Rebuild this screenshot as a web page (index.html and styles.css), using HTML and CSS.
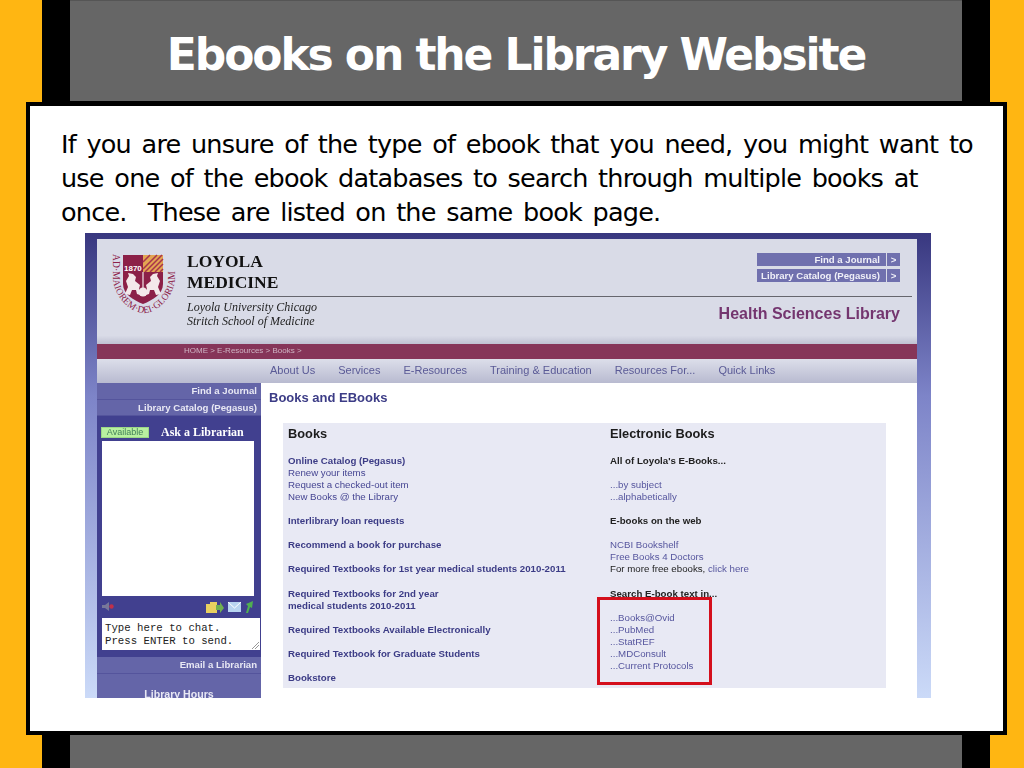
FILE: index.html
```html
<!DOCTYPE html>
<html lang="en">
<head>
    <meta charset="utf-8">
    <meta name="viewport" content="width=device-width, initial-scale=1.0">
    <title>Ebooks on the Library Website</title>
    <link rel="stylesheet" href="styles.css">
</head>
<body>
    <div class="slide">
        <h1 class="title-bar">Ebooks on the Library Website</h1>

        <div class="card">
            <p class="intro">If you are unsure of the type of ebook that you need, you might want to<br>use one of the ebook databases to search through multiple books at<br>once.&nbsp; These are listed on the same book page.</p>

            <!-- library website screenshot -->
            <div class="shot">
                <div class="site">
                    <header class="site-head">
                        <div class="brand-row">
                            <svg class="crest" width="68" height="68" viewBox="0 0 68 68">
                                <defs>
                                    <path id="motto" d="M3 6 V28 C3 50 22 65 34 65 C46 65 65 50 65 28 V6"></path>
                                </defs>
                                <text class="motto"><textPath href="#motto" textLength="132">AD·MAIOREM·DEI·GLORIAM</textPath></text>
                                <path d="M13 7 H53 V36 C53 46 43 52 33 56 C23 52 13 46 13 36 Z" fill="#8c2048"></path>
                                <path d="M33 7 H53 V24 H33 Z" fill="#e3a552"></path>
                                <path d="M35 24 L52 7 M40 24 L53 11 M33 21 L47 7 M45 24 L53 16 M33 14 L40 7 M50 24 L53 21" stroke="#a8344c" stroke-width="1.500"></path>
                                <text class="crest-year" x="14" y="23">1870</text>
                                <!-- lions and kettle -->
                                <path d="M15 46 L18 39 L16 33 L19 28 L18 25 L23 26 L26 29 L25 33 L30 37 L29 41 L30 47 L27 46 L26 42 L22 42 L20 47 Z" fill="#f4e8ea"></path>
                                <path d="M51 46 L48 39 L50 33 L47 28 L48 25 L43 26 L40 29 L41 33 L36 37 L37 41 L36 47 L39 46 L40 42 L44 42 L46 47 Z" fill="#f4e8ea"></path>
                                <path d="M33 24 V40" stroke="#f4e8ea" stroke-width="1.200"></path>
                                <circle cx="33" cy="44" r="4.500" fill="#f4e8ea"></circle>
                            </svg>
                            <div class="brand-name">LOYOLA<br>MEDICINE</div>
                            <div class="quick-btns">
                                <a class="quick-btn"><span>Find a Journal</span><b>&gt;</b></a>
                                <a class="quick-btn"><span>Library Catalog (Pegasus)</span><b>&gt;</b></a>
                            </div>
                        </div>
                        <div class="brand-sub">
                            <div class="school">Loyola University Chicago<br>Stritch School of Medicine</div>
                            <div class="hsl">Health Sciences Library</div>
                        </div>
                    </header>

                    <div class="crumbs">HOME &gt; E-Resources &gt; Books &gt;</div>

                    <nav class="site-nav">
                        <a>About Us</a>
                        <a>Services</a>
                        <a>E-Resources</a>
                        <a>Training &amp; Education</a>
                        <a>Resources For...</a>
                        <a>Quick Links</a>
                    </nav>

                    <div class="site-body">
                        <aside class="side">
                            <a class="side-link side-link-first">Find a Journal</a>
                            <a class="side-link">Library Catalog (Pegasus)</a>
                            <div class="chat">
                                <div class="chat-top">
                                    <span class="badge">Available</span>
                                    <span class="ask">Ask a Librarian</span>
                                </div>
                                <div class="chat-log"></div>
                                <div class="chat-icons">
                                    <svg width="12" height="10" viewBox="0 0 12 10">
                                        <path d="M0 3 H3 L7 0 V9 L3 6 H0 Z" fill="#77789a"></path>
                                        <circle cx="9.500" cy="4.500" r="2.200" fill="#c0304a"></circle>
                                    </svg>
                                    <span class="chat-tools">
                                        <svg width="18" height="14" viewBox="0 0 18 14">
                                            <path d="M0 4 H4 V2 H11 V13 H0 Z" fill="#e8d060"></path>
                                            <path d="M10 5 H14 V2 L18 8 L14 13 V10 H10 Z" fill="#70b050"></path>
                                        </svg>
                                        <svg width="13" height="10" viewBox="0 0 13 10">
                                            <rect width="13" height="10" fill="#b8d4f0"></rect>
                                            <path d="M0 0 L6.500 6 L13 0" fill="none" stroke="#ffffff"></path>
                                        </svg>
                                        <svg width="9" height="12" viewBox="0 0 9 12">
                                            <path d="M1 12 L3 5 L1 3 L8 0 L7 7 L5 6 L3 12 Z" fill="#50b050"></path>
                                        </svg>
                                    </span>
                                </div>
                                <div class="chat-input">Type here to chat.<br>Press ENTER to send.
                                    <svg class="grip" width="7" height="7" viewBox="0 0 7 7">
                                        <path d="M0 7 L7 0 M3 7 L7 3" stroke="#999"></path>
                                    </svg>
                                </div>
                            </div>
                            <a class="side-link side-email">Email a Librarian</a>
                            <a class="side-hours">Library Hours</a>
                        </aside>

                        <main class="main">
                            <h2 class="page-title">Books and EBooks</h2>
                            <div class="book-box">
                                <div class="book-col">
                                    <h3>Books</h3>
                                    <a class="strong">Online Catalog (Pegasus)</a>
                                    <a>Renew your items</a>
                                    <a>Request a checked-out item</a>
                                    <a>New Books @ the Library</a>
                                    <a class="strong gap">Interlibrary loan requests</a>
                                    <a class="strong gap">Recommend a book for purchase</a>
                                    <a class="strong gap">Required Textbooks for 1st year medical students 2010-2011</a>
                                    <a class="strong gap">Required Textbooks for 2nd year<br>medical students 2010-2011</a>
                                    <a class="strong gap">Required Textbooks Available Electronically</a>
                                    <a class="strong gap">Required Textbook for Graduate Students</a>
                                    <a class="strong gap">Bookstore</a>
                                </div>
                                <div class="book-col book-col-right">
                                    <h3>Electronic Books</h3>
                                    <b class="dark">All of Loyola's E-Books...</b>
                                    <a class="gap">...by subject</a>
                                    <a>...alphabetically</a>
                                    <b class="dark gap">E-books on the web</b>
                                    <a class="gap">NCBI Bookshelf</a>
                                    <a>Free Books 4 Doctors</a>
                                    <span class="dark-line">For more free ebooks, <a class="inline-link">click here</a></span>
                                    <b class="dark gap">Search E-book text in...</b>
                                    <a class="gap">...Books@Ovid</a>
                                    <a>...PubMed</a>
                                    <a>...StatREF</a>
                                    <a>...MDConsult</a>
                                    <a>...Current Protocols</a>
                                </div>
                            </div>
                        </main>
                    </div>
                </div>
                <div class="highlight"></div>
            </div>
        </div>

        <div class="foot-bar"></div>
    </div>
</body>
</html>
```

FILE: styles.css
```css
* {
    box-sizing: border-box;
}

body {
    margin: 0;
    background-color: #ffb612;
    font-family: "Liberation Sans", Arial, sans-serif;
}

/* black band with the grey title behind the white card */
.slide {
    width: 948px;
    height: 768px;
    margin: 0 0 0 42px;
    padding: 0 28px;
    background-color: #000;
}

.title-bar {
    height: 101px;
    margin: 0;
    padding-top: 27px;
    background-color: #666;
    border-top: 1px solid #555;
    color: #fff;
    font-family: "DejaVu Sans", sans-serif;
    font-size: 44px;
    font-weight: 700;
    letter-spacing: -2.1px;
    line-height: 54px;
    text-align: center;
}

.card {
    position: relative;
    z-index: 1;
    width: 981px;
    height: 633px;
    margin: 1px 0 0 -44px;
    padding: 21px 0 0 31px;
    background-color: #fff;
    border: 4px solid #000;
}

.foot-bar {
    height: 33px;
    background-color: #666;
}

.intro {
    margin: 0;
    color: #000;
    font-family: "DejaVu Sans", sans-serif;
    font-size: 25.500px;
    letter-spacing: -0.8px;
    word-spacing: 3.300px;
    line-height: 34px;
}

/* the screenshot */
.shot {
    position: relative;
    width: 846px;
    height: 465px;
    margin: 4px 0 0 24px;
    padding: 6px 14px 0 12px;
    background: linear-gradient(#38377f, #7d84c8 35%, #cbdaf8);
    overflow: hidden;
}

.site {
    height: 459px;
    background-color: #fff;
    filter: blur(0.4px);
}

.site-head {
    height: 105px;
    padding: 9px 17px 0 13px;
    background: linear-gradient(#d9dbe7 92%, #bfc1d2);
}

.brand-row {
    display: flex;
    height: 48px;
}

.crest {
    flex: none;
}

.motto {
    font-family: "Liberation Serif", serif;
    font-size: 9.500px;
    fill: #8c2048;
}

.crest-year {
    font-family: "Liberation Sans", sans-serif;
    font-size: 8px;
    font-weight: 700;
    fill: #fff;
}

.brand-name {
    margin-left: 9px;
    padding-top: 3px;
    color: #111;
    font-family: "Liberation Serif", serif;
    font-size: 17.500px;
    font-weight: 700;
    line-height: 21px;
}

.quick-btns {
    display: flex;
    flex-direction: column;
    gap: 3px;
    width: 143px;
    margin-left: auto;
    margin-top: 5px;
}

.quick-btn {
    display: flex;
    gap: 1px;
    height: 13px;
    color: #f0f0f8;
    font-size: 9.600px;
    font-weight: 700;
    line-height: 13px;
}

.quick-btn span {
    flex: 1;
    padding-right: 6px;
    background-color: #7070ae;
    text-align: right;
    white-space: nowrap;
}

.quick-btn b {
    width: 13px;
    background-color: #7070ae;
    text-align: center;
}

.brand-sub {
    display: flex;
    justify-content: space-between;
    height: 48px;
    margin: 0 -12px 0 77px;
    padding: 3px 12px 0 0;
    border-top: 1px solid #66666e;
}

.school {
    color: #222;
    font-family: "Liberation Serif", serif;
    font-size: 12px;
    font-style: italic;
    line-height: 14px;
}

.hsl {
    margin-top: 5px;
    color: #74356f;
    font-size: 16px;
    font-weight: 700;
    line-height: 18px;
}

.crumbs {
    height: 15px;
    padding-left: 87px;
    background-color: #863559;
    color: #cfb4c4;
    font-size: 8px;
    line-height: 14px;
}

.site-nav {
    display: flex;
    gap: 23px;
    height: 24px;
    padding-left: 173px;
    background: linear-gradient(#dcdeea, #b8bad0);
    color: #5a5a96;
    font-size: 11px;
    line-height: 22px;
}

.site-body {
    display: flex;
    height: 315px;
}

.side {
    flex: none;
    width: 164px;
    background-color: #41408f;
}

.side-link {
    display: block;
    height: 16px;
    padding-right: 4px;
    background-color: #6465a8;
    border-bottom: 1px solid #54549c;
    color: #e8e8f4;
    font-size: 9.600px;
    font-weight: 700;
    line-height: 15px;
    text-align: right;
}

.side-link-first {
    height: 17px;
}

.chat {
    height: 241px;
    padding: 10px 0 0 4px;
}

.chat-top {
    display: flex;
    align-items: center;
    gap: 12px;
    height: 12px;
}

.badge {
    width: 48px;
    height: 11px;
    background-color: #b8f0a0;
    border: 1px solid #9cd888;
    color: #44805a;
    font-size: 9px;
    line-height: 9px;
    text-align: center;
}

.ask {
    color: #fff;
    font-family: "Liberation Serif", serif;
    font-size: 12px;
    font-weight: 700;
}

.chat-log {
    width: 152px;
    height: 155px;
    margin: 3px 0 0 1px;
    background-color: #fff;
}

.chat-icons {
    display: flex;
    align-items: center;
    justify-content: space-between;
    width: 152px;
    height: 22px;
    margin-left: 1px;
}

.chat-tools {
    display: flex;
    align-items: center;
    gap: 4px;
}

.chat-input {
    position: relative;
    width: 158px;
    height: 32px;
    margin-left: 1px;
    padding: 4px 3px;
    background-color: #fff;
    color: #222;
    font-family: "Liberation Mono", monospace;
    font-size: 10.700px;
    line-height: 12.500px;
}

.grip {
    position: absolute;
    right: 1px;
    bottom: 1px;
}

.side-email {
    height: 17px;
}

.side-hours {
    display: block;
    height: 30px;
    padding-top: 14px;
    background-color: #6465a8;
    color: #e8e8f4;
    font-size: 10.600px;
    font-weight: 700;
    text-align: center;
}

.main {
    flex: 1;
    min-width: 0;
    padding: 7px 31px 0 8px;
}

.page-title {
    margin: 0;
    color: #3c3c86;
    font-size: 13px;
    font-weight: 700;
    line-height: 15px;
}

.book-box {
    display: flex;
    height: 265px;
    margin: 18px 0 0 14px;
    padding-left: 5px;
    background-color: #e8e9f4;
    overflow: hidden;
}

.book-col {
    flex: none;
    width: 322px;
    color: #454592;
    font-size: 9.700px;
    line-height: 12.050px;
}

.book-col-right {
    flex: 1;
    width: auto;
}

.book-col h3 {
    height: 32px;
    margin: 0;
    padding-top: 4px;
    color: #1c1c1c;
    font-size: 12.800px;
    font-weight: 700;
    line-height: 14px;
}

.book-col a,
.book-col b,
.dark-line {
    display: block;
}

.book-col a.inline-link {
    display: inline;
}

.strong {
    font-weight: 700;
    color: #3c3c86;
}

.gap {
    margin-top: 12.050px;
}

.dark,
.dark-line {
    color: #222;
}

.book-col-right a {
    color: #56569e;
}

.highlight {
    position: absolute;
    left: 512px;
    top: 364px;
    width: 115px;
    height: 88px;
    border: 3px solid #d40f1c;
}
```
